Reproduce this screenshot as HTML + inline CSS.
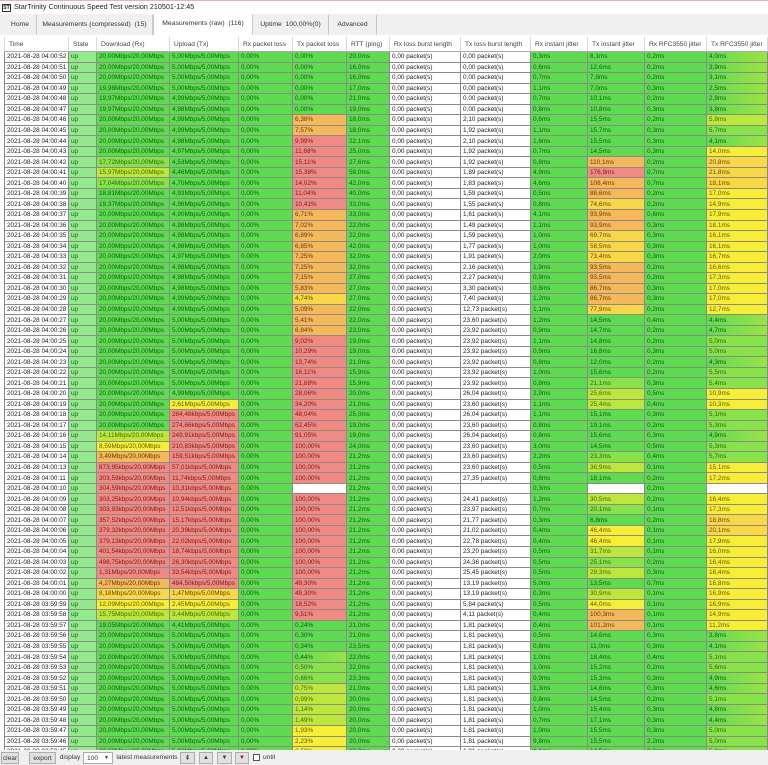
<!DOCTYPE html>
<html><head><meta charset="utf-8"><style>
*{margin:0;padding:0;box-sizing:border-box}
body{width:768px;height:765px;overflow:hidden;background:#fff;font-family:"Liberation Sans",sans-serif;position:relative;color:#222}
.tb{position:absolute;left:0;top:0;width:768px;height:14px;border-top:1px solid #e8b0b8;font-size:7.2px;line-height:12px;padding-left:14px}
.ic{position:absolute;left:2px;top:3px;width:9px;height:8px;border:1px solid #333;font-size:5px;line-height:6px;text-align:center;font-weight:bold}
.tabs{position:absolute;left:0;top:14px;width:768px;height:21px;background:#f0f0f0}
.tab{position:absolute;top:1px;height:20px;font-size:6.8px;line-height:20px;text-align:center;color:#333;border-right:1px solid #c8c8c8}
.tab.a{background:#fff;border-left:1px solid #ccc;border-right:1px solid #ccc}
.wrap{position:absolute;left:4px;top:37px;width:764px;height:713px;overflow:hidden}
table{border-collapse:separate;border-spacing:0;table-layout:fixed;width:764px}
td{border-right:1px solid #8a8a8a;border-bottom:1px solid #8a8a8a;font-size:6.4px;line-height:9px;height:10.54px;padding:0 0 0 2px;white-space:nowrap;overflow:hidden;color:#222;background:#fff;vertical-align:middle}
td:first-child{border-left:1px solid #8a8a8a}
tr.h td{height:15px;color:#444;font-size:6.6px;padding-left:4px;border-color:#d8d8d8;border-bottom:1px solid #aaa;background:#fff}
.l{background:#92ea8c;color:#0f6e0f}
.g{background:#5edc50;color:#0a620a}
.q{background:linear-gradient(90deg,#62dc50,#98e444);color:#0a620a}
.k{background:#88e24a;color:#2a6a0a}
.v{background:#bbe83a;color:#4a6a00}
.y{background:#f6ef36;color:#6a5a00}
.z{background:#f9d848;color:#6a4a00}
.o{background:#f5b85a;color:#6a3a00}
.r{background:#f08a82;color:#7a1a1a}
.tool{position:absolute;left:0;top:750px;width:768px;height:15px;background:#f0f0f0;font-size:6.6px;color:#333}
.tool div{position:absolute;top:2px;height:12px;line-height:11px;text-align:center;white-space:nowrap}
.bt{background:#e1e1e1;border:1px solid #adadad}
</style></head><body>
<div class="tb"><div class="ic">ST</div>StarTrinity Continuous Speed Test version 210501-12:45</div>
<div class="tabs">
<div class="tab" style="left:4px;width:33px">Home</div>
<div class="tab" style="left:37px;width:116px">Measurements (compressed) &nbsp;(15)</div>
<div class="tab a" style="left:153px;width:100px;top:0;height:21px">Measurements (raw) &nbsp;(116)</div>
<div class="tab" style="left:253px;width:76px">Uptime &nbsp;100,00%(0)</div>
<div class="tab" style="left:329px;width:48px">Advanced</div>
</div>
<div class="wrap"><table>
<colgroup><col style="width:65px"><col style="width:28px"><col style="width:73px"><col style="width:69px"><col style="width:54px"><col style="width:54px"><col style="width:43px"><col style="width:71px"><col style="width:70px"><col style="width:57px"><col style="width:57px"><col style="width:62px"><col style="width:61px"></colgroup>
<tr class="h"><td>Time</td><td>State</td><td>Download (Rx)</td><td>Upload (Tx)</td><td>Rx packet loss</td><td>Tx packet loss</td><td>RTT (ping)</td><td>Rx loss burst length</td><td>Tx loss burst length</td><td>Rx instant jitter</td><td>Tx instant jitter</td><td>Rx RFC3550 jitter</td><td>Tx RFC3550 jitter</td></tr>
<tr><td>2021-08-28 04:00:52</td><td class="l">up</td><td class="g">20,00Mbps/20,00Mbps</td><td class="g">5,00Mbps/5,00Mbps</td><td class="g">0,00%</td><td class="g">0,00%</td><td class="g">20,0ms</td><td>0,00 packet(s)</td><td>0,00 packet(s)</td><td class="g">0,3ms</td><td class="g">8,1ms</td><td class="g">0,2ms</td><td class="q">4,0ms</td></tr>
<tr><td>2021-08-28 04:00:51</td><td class="l">up</td><td class="g">20,00Mbps/20,00Mbps</td><td class="g">5,00Mbps/5,00Mbps</td><td class="g">0,00%</td><td class="g">0,00%</td><td class="g">16,0ms</td><td>0,00 packet(s)</td><td>0,00 packet(s)</td><td class="g">0,6ms</td><td class="g">12,6ms</td><td class="g">0,2ms</td><td class="q">3,9ms</td></tr>
<tr><td>2021-08-28 04:00:50</td><td class="l">up</td><td class="g">20,00Mbps/20,00Mbps</td><td class="g">5,00Mbps/5,00Mbps</td><td class="g">0,00%</td><td class="g">0,00%</td><td class="g">16,0ms</td><td>0,00 packet(s)</td><td>0,00 packet(s)</td><td class="g">0,7ms</td><td class="g">7,8ms</td><td class="g">0,2ms</td><td class="q">3,1ms</td></tr>
<tr><td>2021-08-28 04:00:49</td><td class="l">up</td><td class="g">19,98Mbps/20,00Mbps</td><td class="g">5,00Mbps/5,00Mbps</td><td class="g">0,00%</td><td class="g">0,00%</td><td class="g">17,0ms</td><td>0,00 packet(s)</td><td>0,00 packet(s)</td><td class="g">1,1ms</td><td class="g">7,0ms</td><td class="g">0,3ms</td><td class="q">2,5ms</td></tr>
<tr><td>2021-08-28 04:00:48</td><td class="l">up</td><td class="g">19,97Mbps/20,00Mbps</td><td class="g">4,99Mbps/5,00Mbps</td><td class="g">0,00%</td><td class="g">0,00%</td><td class="g">21,0ms</td><td>0,00 packet(s)</td><td>0,00 packet(s)</td><td class="g">0,7ms</td><td class="g">10,1ms</td><td class="g">0,2ms</td><td class="q">2,8ms</td></tr>
<tr><td>2021-08-28 04:00:47</td><td class="l">up</td><td class="g">19,97Mbps/20,00Mbps</td><td class="g">4,98Mbps/5,00Mbps</td><td class="g">0,00%</td><td class="g">0,00%</td><td class="g">19,0ms</td><td>0,00 packet(s)</td><td>0,00 packet(s)</td><td class="g">0,8ms</td><td class="g">10,8ms</td><td class="g">0,3ms</td><td class="q">3,8ms</td></tr>
<tr><td>2021-08-28 04:00:46</td><td class="l">up</td><td class="g">20,00Mbps/20,00Mbps</td><td class="g">4,99Mbps/5,00Mbps</td><td class="g">0,00%</td><td class="o">6,38%</td><td class="g">18,0ms</td><td>0,00 packet(s)</td><td>2,10 packet(s)</td><td class="g">0,6ms</td><td class="g">15,5ms</td><td class="g">0,2ms</td><td class="v">5,8ms</td></tr>
<tr><td>2021-08-28 04:00:45</td><td class="l">up</td><td class="g">20,00Mbps/20,00Mbps</td><td class="g">4,99Mbps/5,00Mbps</td><td class="g">0,00%</td><td class="o">7,57%</td><td class="g">18,0ms</td><td>0,00 packet(s)</td><td>1,92 packet(s)</td><td class="g">1,1ms</td><td class="g">15,7ms</td><td class="g">0,3ms</td><td class="k">5,7ms</td></tr>
<tr><td>2021-08-28 04:00:44</td><td class="l">up</td><td class="g">20,00Mbps/20,00Mbps</td><td class="g">4,98Mbps/5,00Mbps</td><td class="g">0,00%</td><td class="r">9,99%</td><td class="g">22,1ms</td><td>0,00 packet(s)</td><td>2,10 packet(s)</td><td class="g">1,6ms</td><td class="g">15,5ms</td><td class="g">0,3ms</td><td class="q">4,1ms</td></tr>
<tr><td>2021-08-28 04:00:43</td><td class="l">up</td><td class="g">20,00Mbps/20,00Mbps</td><td class="g">4,97Mbps/5,00Mbps</td><td class="g">0,00%</td><td class="r">11,68%</td><td class="g">25,0ms</td><td>0,00 packet(s)</td><td>1,92 packet(s)</td><td class="g">0,7ms</td><td class="g">14,5ms</td><td class="g">0,3ms</td><td class="y">14,0ms</td></tr>
<tr><td>2021-08-28 04:00:42</td><td class="l">up</td><td class="k">17,72Mbps/20,00Mbps</td><td class="g">4,53Mbps/5,00Mbps</td><td class="g">0,00%</td><td class="r">15,11%</td><td class="g">27,6ms</td><td>0,00 packet(s)</td><td>1,92 packet(s)</td><td class="g">0,8ms</td><td class="o">110,1ms</td><td class="g">0,2ms</td><td class="z">20,8ms</td></tr>
<tr><td>2021-08-28 04:00:41</td><td class="l">up</td><td class="v">15,97Mbps/20,00Mbps</td><td class="g">4,46Mbps/5,00Mbps</td><td class="g">0,00%</td><td class="r">15,38%</td><td class="g">59,0ms</td><td>0,00 packet(s)</td><td>1,89 packet(s)</td><td class="g">4,9ms</td><td class="r">176,9ms</td><td class="g">0,7ms</td><td class="z">21,8ms</td></tr>
<tr><td>2021-08-28 04:00:40</td><td class="l">up</td><td class="k">17,04Mbps/20,00Mbps</td><td class="g">4,70Mbps/5,00Mbps</td><td class="g">0,00%</td><td class="r">14,02%</td><td class="g">42,0ms</td><td>0,00 packet(s)</td><td>1,83 packet(s)</td><td class="g">4,6ms</td><td class="o">108,4ms</td><td class="g">0,7ms</td><td class="z">18,1ms</td></tr>
<tr><td>2021-08-28 04:00:39</td><td class="l">up</td><td class="g">18,81Mbps/20,00Mbps</td><td class="g">4,93Mbps/5,00Mbps</td><td class="g">0,00%</td><td class="r">11,04%</td><td class="g">40,0ms</td><td>0,00 packet(s)</td><td>1,59 packet(s)</td><td class="g">0,5ms</td><td class="o">88,6ms</td><td class="g">0,2ms</td><td class="y">17,0ms</td></tr>
<tr><td>2021-08-28 04:00:38</td><td class="l">up</td><td class="g">19,37Mbps/20,00Mbps</td><td class="g">4,96Mbps/5,00Mbps</td><td class="g">0,00%</td><td class="r">10,41%</td><td class="g">33,0ms</td><td>0,00 packet(s)</td><td>1,55 packet(s)</td><td class="g">0,8ms</td><td class="z">74,6ms</td><td class="g">0,2ms</td><td class="y">14,9ms</td></tr>
<tr><td>2021-08-28 04:00:37</td><td class="l">up</td><td class="g">20,00Mbps/20,00Mbps</td><td class="g">4,90Mbps/5,00Mbps</td><td class="g">0,00%</td><td class="o">6,71%</td><td class="g">33,0ms</td><td>0,00 packet(s)</td><td>1,61 packet(s)</td><td class="g">4,1ms</td><td class="o">93,9ms</td><td class="g">0,6ms</td><td class="y">17,9ms</td></tr>
<tr><td>2021-08-28 04:00:36</td><td class="l">up</td><td class="g">20,00Mbps/20,00Mbps</td><td class="g">4,98Mbps/5,00Mbps</td><td class="g">0,00%</td><td class="o">7,02%</td><td class="g">22,0ms</td><td>0,00 packet(s)</td><td>1,49 packet(s)</td><td class="g">1,1ms</td><td class="o">93,9ms</td><td class="g">0,3ms</td><td class="y">18,1ms</td></tr>
<tr><td>2021-08-28 04:00:35</td><td class="l">up</td><td class="g">20,00Mbps/20,00Mbps</td><td class="g">4,98Mbps/5,00Mbps</td><td class="g">0,00%</td><td class="o">6,89%</td><td class="g">22,0ms</td><td>0,00 packet(s)</td><td>1,59 packet(s)</td><td class="g">1,0ms</td><td class="z">69,7ms</td><td class="g">0,3ms</td><td class="y">16,1ms</td></tr>
<tr><td>2021-08-28 04:00:34</td><td class="l">up</td><td class="g">20,00Mbps/20,00Mbps</td><td class="g">4,98Mbps/5,00Mbps</td><td class="g">0,00%</td><td class="o">6,85%</td><td class="g">42,0ms</td><td>0,00 packet(s)</td><td>1,77 packet(s)</td><td class="g">1,0ms</td><td class="z">58,5ms</td><td class="g">0,3ms</td><td class="y">16,1ms</td></tr>
<tr><td>2021-08-28 04:00:33</td><td class="l">up</td><td class="g">20,00Mbps/20,00Mbps</td><td class="g">4,97Mbps/5,00Mbps</td><td class="g">0,00%</td><td class="o">7,25%</td><td class="g">32,0ms</td><td>0,00 packet(s)</td><td>1,91 packet(s)</td><td class="g">2,0ms</td><td class="z">73,4ms</td><td class="g">0,3ms</td><td class="y">16,7ms</td></tr>
<tr><td>2021-08-28 04:00:32</td><td class="l">up</td><td class="g">20,00Mbps/20,00Mbps</td><td class="g">4,98Mbps/5,00Mbps</td><td class="g">0,00%</td><td class="o">7,25%</td><td class="g">32,0ms</td><td>0,00 packet(s)</td><td>2,16 packet(s)</td><td class="g">1,9ms</td><td class="o">93,5ms</td><td class="g">0,2ms</td><td class="y">16,6ms</td></tr>
<tr><td>2021-08-28 04:00:31</td><td class="l">up</td><td class="g">20,00Mbps/20,00Mbps</td><td class="g">4,98Mbps/5,00Mbps</td><td class="g">0,00%</td><td class="o">7,15%</td><td class="g">27,0ms</td><td>0,00 packet(s)</td><td>2,27 packet(s)</td><td class="g">0,9ms</td><td class="o">93,5ms</td><td class="g">0,2ms</td><td class="y">17,3ms</td></tr>
<tr><td>2021-08-28 04:00:30</td><td class="l">up</td><td class="g">20,00Mbps/20,00Mbps</td><td class="g">4,98Mbps/5,00Mbps</td><td class="g">0,00%</td><td class="o">5,83%</td><td class="g">27,0ms</td><td>0,00 packet(s)</td><td>3,30 packet(s)</td><td class="g">0,8ms</td><td class="o">86,7ms</td><td class="g">0,3ms</td><td class="y">17,0ms</td></tr>
<tr><td>2021-08-28 04:00:29</td><td class="l">up</td><td class="g">20,00Mbps/20,00Mbps</td><td class="g">4,99Mbps/5,00Mbps</td><td class="g">0,00%</td><td class="z">4,74%</td><td class="g">27,0ms</td><td>0,00 packet(s)</td><td>7,40 packet(s)</td><td class="g">1,2ms</td><td class="o">86,7ms</td><td class="g">0,3ms</td><td class="y">17,0ms</td></tr>
<tr><td>2021-08-28 04:00:28</td><td class="l">up</td><td class="g">20,00Mbps/20,00Mbps</td><td class="g">4,99Mbps/5,00Mbps</td><td class="g">0,00%</td><td class="o">5,09%</td><td class="g">22,0ms</td><td>0,00 packet(s)</td><td>12,73 packet(s)</td><td class="g">1,1ms</td><td class="z">77,9ms</td><td class="g">0,2ms</td><td class="y">12,7ms</td></tr>
<tr><td>2021-08-28 04:00:27</td><td class="l">up</td><td class="g">20,00Mbps/20,00Mbps</td><td class="g">5,00Mbps/5,00Mbps</td><td class="g">0,00%</td><td class="o">5,41%</td><td class="g">22,0ms</td><td>0,00 packet(s)</td><td>23,60 packet(s)</td><td class="g">1,2ms</td><td class="g">14,5ms</td><td class="g">0,4ms</td><td class="q">4,4ms</td></tr>
<tr><td>2021-08-28 04:00:26</td><td class="l">up</td><td class="g">20,00Mbps/20,00Mbps</td><td class="g">5,00Mbps/5,00Mbps</td><td class="g">0,00%</td><td class="o">6,84%</td><td class="g">23,0ms</td><td>0,00 packet(s)</td><td>23,92 packet(s)</td><td class="g">0,9ms</td><td class="g">14,7ms</td><td class="g">0,2ms</td><td class="q">4,7ms</td></tr>
<tr><td>2021-08-28 04:00:25</td><td class="l">up</td><td class="g">20,00Mbps/20,00Mbps</td><td class="g">5,00Mbps/5,00Mbps</td><td class="g">0,00%</td><td class="r">9,02%</td><td class="g">19,0ms</td><td>0,00 packet(s)</td><td>23,92 packet(s)</td><td class="g">1,1ms</td><td class="g">14,8ms</td><td class="g">0,2ms</td><td class="k">5,0ms</td></tr>
<tr><td>2021-08-28 04:00:24</td><td class="l">up</td><td class="g">20,00Mbps/20,00Mbps</td><td class="g">5,00Mbps/5,00Mbps</td><td class="g">0,00%</td><td class="r">10,29%</td><td class="g">19,0ms</td><td>0,00 packet(s)</td><td>23,92 packet(s)</td><td class="g">0,9ms</td><td class="g">16,8ms</td><td class="g">0,3ms</td><td class="k">5,0ms</td></tr>
<tr><td>2021-08-28 04:00:23</td><td class="l">up</td><td class="g">20,00Mbps/20,00Mbps</td><td class="g">5,00Mbps/5,00Mbps</td><td class="g">0,00%</td><td class="r">13,74%</td><td class="g">21,0ms</td><td>0,00 packet(s)</td><td>23,92 packet(s)</td><td class="g">0,8ms</td><td class="g">12,0ms</td><td class="g">0,2ms</td><td class="q">4,3ms</td></tr>
<tr><td>2021-08-28 04:00:22</td><td class="l">up</td><td class="g">20,00Mbps/20,00Mbps</td><td class="g">5,00Mbps/5,00Mbps</td><td class="g">0,00%</td><td class="r">16,11%</td><td class="g">15,9ms</td><td>0,00 packet(s)</td><td>23,92 packet(s)</td><td class="g">1,0ms</td><td class="g">15,6ms</td><td class="g">0,2ms</td><td class="k">5,5ms</td></tr>
<tr><td>2021-08-28 04:00:21</td><td class="l">up</td><td class="g">20,00Mbps/20,00Mbps</td><td class="g">5,00Mbps/5,00Mbps</td><td class="g">0,00%</td><td class="r">21,88%</td><td class="g">15,9ms</td><td>0,00 packet(s)</td><td>23,92 packet(s)</td><td class="g">0,8ms</td><td class="k">21,1ms</td><td class="g">0,3ms</td><td class="k">5,4ms</td></tr>
<tr><td>2021-08-28 04:00:20</td><td class="l">up</td><td class="g">20,00Mbps/20,00Mbps</td><td class="g">4,99Mbps/5,00Mbps</td><td class="g">0,00%</td><td class="r">28,06%</td><td class="g">20,0ms</td><td>0,00 packet(s)</td><td>26,04 packet(s)</td><td class="g">2,9ms</td><td class="v">25,6ms</td><td class="g">0,5ms</td><td class="y">10,9ms</td></tr>
<tr><td>2021-08-28 04:00:19</td><td class="l">up</td><td class="g">20,00Mbps/20,00Mbps</td><td class="y">2,61Mbps/5,00Mbps</td><td class="g">0,00%</td><td class="r">34,20%</td><td class="g">21,0ms</td><td>0,00 packet(s)</td><td>23,60 packet(s)</td><td class="g">1,1ms</td><td class="v">25,4ms</td><td class="g">0,4ms</td><td class="y">10,3ms</td></tr>
<tr><td>2021-08-28 04:00:18</td><td class="l">up</td><td class="g">20,00Mbps/20,00Mbps</td><td class="r">284,48kbps/5,00Mbps</td><td class="g">0,00%</td><td class="r">48,04%</td><td class="g">25,0ms</td><td>0,00 packet(s)</td><td>26,04 packet(s)</td><td class="g">1,1ms</td><td class="g">15,1ms</td><td class="g">0,3ms</td><td class="k">5,1ms</td></tr>
<tr><td>2021-08-28 04:00:17</td><td class="l">up</td><td class="g">20,00Mbps/20,00Mbps</td><td class="r">274,66kbps/5,00Mbps</td><td class="g">0,00%</td><td class="r">62,45%</td><td class="g">19,0ms</td><td>0,00 packet(s)</td><td>23,60 packet(s)</td><td class="g">0,8ms</td><td class="g">19,1ms</td><td class="g">0,2ms</td><td class="k">5,3ms</td></tr>
<tr><td>2021-08-28 04:00:16</td><td class="l">up</td><td class="v">14,11Mbps/20,00Mbps</td><td class="r">249,91kbps/5,00Mbps</td><td class="g">0,00%</td><td class="r">91,05%</td><td class="g">19,0ms</td><td>0,00 packet(s)</td><td>26,04 packet(s)</td><td class="g">0,8ms</td><td class="g">15,6ms</td><td class="g">0,3ms</td><td class="q">4,9ms</td></tr>
<tr><td>2021-08-28 04:00:15</td><td class="l">up</td><td class="y">8,59Mbps/20,00Mbps</td><td class="r">210,83kbps/5,00Mbps</td><td class="g">0,00%</td><td class="r">100,00%</td><td class="g">24,0ms</td><td>0,00 packet(s)</td><td>23,60 packet(s)</td><td class="g">3,0ms</td><td class="g">14,5ms</td><td class="g">0,5ms</td><td class="k">5,3ms</td></tr>
<tr><td>2021-08-28 04:00:14</td><td class="l">up</td><td class="o">3,49Mbps/20,00Mbps</td><td class="r">159,51kbps/5,00Mbps</td><td class="g">0,00%</td><td class="r">100,00%</td><td class="g">21,2ms</td><td>0,00 packet(s)</td><td>23,60 packet(s)</td><td class="g">2,2ms</td><td class="k">23,3ms</td><td class="g">0,4ms</td><td class="k">5,7ms</td></tr>
<tr><td>2021-08-28 04:00:13</td><td class="l">up</td><td class="r">873,95kbps/20,00Mbps</td><td class="r">57,01kbps/5,00Mbps</td><td class="g">0,00%</td><td class="r">100,00%</td><td class="g">21,2ms</td><td>0,00 packet(s)</td><td>23,60 packet(s)</td><td class="g">0,5ms</td><td class="v">36,9ms</td><td class="g">0,1ms</td><td class="y">15,1ms</td></tr>
<tr><td>2021-08-28 04:00:11</td><td class="l">up</td><td class="r">303,59kbps/20,00Mbps</td><td class="r">11,74kbps/5,00Mbps</td><td class="g">0,00%</td><td class="r">100,00%</td><td class="g">21,2ms</td><td>0,00 packet(s)</td><td>27,35 packet(s)</td><td class="g">0,8ms</td><td class="g">18,1ms</td><td class="g">0,2ms</td><td class="y">17,2ms</td></tr>
<tr><td>2021-08-28 04:00:10</td><td class="l">up</td><td class="r">304,59kbps/20,00Mbps</td><td class="r">10,31kbps/5,00Mbps</td><td class="g">0,00%</td><td></td><td class="g">21,2ms</td><td>0,00 packet(s)</td><td></td><td class="g">0,3ms</td><td></td><td class="g">0,2ms</td><td></td></tr>
<tr><td>2021-08-28 04:00:09</td><td class="l">up</td><td class="r">303,25kbps/20,00Mbps</td><td class="r">10,94kbps/5,00Mbps</td><td class="g">0,00%</td><td class="r">100,00%</td><td class="g">21,2ms</td><td>0,00 packet(s)</td><td>24,41 packet(s)</td><td class="g">1,2ms</td><td class="v">30,5ms</td><td class="g">0,2ms</td><td class="y">16,4ms</td></tr>
<tr><td>2021-08-28 04:00:08</td><td class="l">up</td><td class="r">303,93kbps/20,00Mbps</td><td class="r">12,51kbps/5,00Mbps</td><td class="g">0,00%</td><td class="r">100,00%</td><td class="g">21,2ms</td><td>0,00 packet(s)</td><td>23,97 packet(s)</td><td class="g">0,7ms</td><td class="k">20,1ms</td><td class="g">0,1ms</td><td class="y">17,3ms</td></tr>
<tr><td>2021-08-28 04:00:07</td><td class="l">up</td><td class="r">357,52kbps/20,00Mbps</td><td class="r">15,17kbps/5,00Mbps</td><td class="g">0,00%</td><td class="r">100,00%</td><td class="g">21,2ms</td><td>0,00 packet(s)</td><td>21,77 packet(s)</td><td class="g">0,3ms</td><td class="g">6,8ms</td><td class="g">0,2ms</td><td class="z">18,8ms</td></tr>
<tr><td>2021-08-28 04:00:06</td><td class="l">up</td><td class="r">379,32kbps/20,00Mbps</td><td class="r">20,39kbps/5,00Mbps</td><td class="g">0,00%</td><td class="r">100,00%</td><td class="g">21,2ms</td><td>0,00 packet(s)</td><td>21,02 packet(s)</td><td class="g">0,4ms</td><td class="y">46,4ms</td><td class="g">0,1ms</td><td class="z">20,1ms</td></tr>
<tr><td>2021-08-28 04:00:05</td><td class="l">up</td><td class="r">379,13kbps/20,00Mbps</td><td class="r">22,02kbps/5,00Mbps</td><td class="g">0,00%</td><td class="r">100,00%</td><td class="g">21,2ms</td><td>0,00 packet(s)</td><td>22,78 packet(s)</td><td class="g">0,4ms</td><td class="y">46,4ms</td><td class="g">0,1ms</td><td class="y">17,9ms</td></tr>
<tr><td>2021-08-28 04:00:04</td><td class="l">up</td><td class="r">401,54kbps/20,00Mbps</td><td class="r">18,74kbps/5,00Mbps</td><td class="g">0,00%</td><td class="r">100,00%</td><td class="g">21,2ms</td><td>0,00 packet(s)</td><td>23,20 packet(s)</td><td class="g">0,5ms</td><td class="v">31,7ms</td><td class="g">0,1ms</td><td class="y">16,0ms</td></tr>
<tr><td>2021-08-28 04:00:03</td><td class="l">up</td><td class="r">498,75kbps/20,00Mbps</td><td class="r">26,30kbps/5,00Mbps</td><td class="g">0,00%</td><td class="r">100,00%</td><td class="g">21,2ms</td><td>0,00 packet(s)</td><td>24,36 packet(s)</td><td class="g">0,5ms</td><td class="k">25,1ms</td><td class="g">0,2ms</td><td class="y">16,4ms</td></tr>
<tr><td>2021-08-28 04:00:02</td><td class="l">up</td><td class="r">1,31Mbps/20,00Mbps</td><td class="r">33,54kbps/5,00Mbps</td><td class="g">0,00%</td><td class="r">100,00%</td><td class="g">21,2ms</td><td>0,00 packet(s)</td><td>25,45 packet(s)</td><td class="g">0,5ms</td><td class="v">29,3ms</td><td class="g">0,3ms</td><td class="y">16,4ms</td></tr>
<tr><td>2021-08-28 04:00:01</td><td class="l">up</td><td class="o">4,27Mbps/20,00Mbps</td><td class="r">484,50kbps/5,00Mbps</td><td class="g">0,00%</td><td class="r">49,30%</td><td class="g">21,2ms</td><td>0,00 packet(s)</td><td>13,19 packet(s)</td><td class="g">5,0ms</td><td class="g">13,5ms</td><td class="g">0,7ms</td><td class="y">16,8ms</td></tr>
<tr><td>2021-08-28 04:00:00</td><td class="l">up</td><td class="z">8,18Mbps/20,00Mbps</td><td class="z">1,47Mbps/5,00Mbps</td><td class="g">0,00%</td><td class="r">49,30%</td><td class="g">21,2ms</td><td>0,00 packet(s)</td><td>13,19 packet(s)</td><td class="g">0,3ms</td><td class="v">30,9ms</td><td class="g">0,1ms</td><td class="y">16,9ms</td></tr>
<tr><td>2021-08-28 03:59:59</td><td class="l">up</td><td class="y">12,09Mbps/20,00Mbps</td><td class="y">2,45Mbps/5,00Mbps</td><td class="g">0,00%</td><td class="r">18,52%</td><td class="g">21,2ms</td><td>0,00 packet(s)</td><td>5,84 packet(s)</td><td class="g">0,5ms</td><td class="y">44,0ms</td><td class="g">0,1ms</td><td class="y">16,9ms</td></tr>
<tr><td>2021-08-28 03:59:58</td><td class="l">up</td><td class="v">15,75Mbps/20,00Mbps</td><td class="v">3,44Mbps/5,00Mbps</td><td class="g">0,00%</td><td class="r">9,51%</td><td class="g">21,2ms</td><td>0,00 packet(s)</td><td>4,11 packet(s)</td><td class="g">0,4ms</td><td class="o">100,3ms</td><td class="g">0,1ms</td><td class="y">14,9ms</td></tr>
<tr><td>2021-08-28 03:59:57</td><td class="l">up</td><td class="g">19,05Mbps/20,00Mbps</td><td class="g">4,41Mbps/5,00Mbps</td><td class="g">0,00%</td><td class="g">0,24%</td><td class="g">21,0ms</td><td>0,00 packet(s)</td><td>1,81 packet(s)</td><td class="g">0,4ms</td><td class="o">101,2ms</td><td class="g">0,1ms</td><td class="y">11,2ms</td></tr>
<tr><td>2021-08-28 03:59:56</td><td class="l">up</td><td class="g">20,00Mbps/20,00Mbps</td><td class="g">5,00Mbps/5,00Mbps</td><td class="g">0,00%</td><td class="g">0,30%</td><td class="g">21,0ms</td><td>0,00 packet(s)</td><td>1,81 packet(s)</td><td class="g">0,5ms</td><td class="g">14,6ms</td><td class="g">0,3ms</td><td class="q">3,8ms</td></tr>
<tr><td>2021-08-28 03:59:55</td><td class="l">up</td><td class="g">20,00Mbps/20,00Mbps</td><td class="g">5,00Mbps/5,00Mbps</td><td class="g">0,00%</td><td class="g">0,34%</td><td class="g">23,5ms</td><td>0,00 packet(s)</td><td>1,81 packet(s)</td><td class="g">0,8ms</td><td class="g">11,0ms</td><td class="g">0,3ms</td><td class="q">4,1ms</td></tr>
<tr><td>2021-08-28 03:59:54</td><td class="l">up</td><td class="g">20,00Mbps/20,00Mbps</td><td class="g">5,00Mbps/5,00Mbps</td><td class="g">0,00%</td><td class="q">0,44%</td><td class="g">22,0ms</td><td>0,00 packet(s)</td><td>1,81 packet(s)</td><td class="g">1,0ms</td><td class="g">18,4ms</td><td class="g">0,4ms</td><td class="k">5,1ms</td></tr>
<tr><td>2021-08-28 03:59:53</td><td class="l">up</td><td class="g">20,00Mbps/20,00Mbps</td><td class="g">5,00Mbps/5,00Mbps</td><td class="g">0,00%</td><td class="k">0,50%</td><td class="g">22,0ms</td><td>0,00 packet(s)</td><td>1,81 packet(s)</td><td class="g">1,0ms</td><td class="g">15,2ms</td><td class="g">0,2ms</td><td class="k">5,6ms</td></tr>
<tr><td>2021-08-28 03:59:52</td><td class="l">up</td><td class="g">20,00Mbps/20,00Mbps</td><td class="g">5,00Mbps/5,00Mbps</td><td class="g">0,00%</td><td class="k">0,66%</td><td class="g">23,3ms</td><td>0,00 packet(s)</td><td>1,81 packet(s)</td><td class="g">0,9ms</td><td class="g">15,3ms</td><td class="g">0,3ms</td><td class="q">4,9ms</td></tr>
<tr><td>2021-08-28 03:59:51</td><td class="l">up</td><td class="g">20,00Mbps/20,00Mbps</td><td class="g">5,00Mbps/5,00Mbps</td><td class="g">0,00%</td><td class="v">0,75%</td><td class="g">21,0ms</td><td>0,00 packet(s)</td><td>1,81 packet(s)</td><td class="g">1,3ms</td><td class="g">14,6ms</td><td class="g">0,3ms</td><td class="q">4,6ms</td></tr>
<tr><td>2021-08-28 03:59:50</td><td class="l">up</td><td class="g">20,00Mbps/20,00Mbps</td><td class="g">5,00Mbps/5,00Mbps</td><td class="g">0,00%</td><td class="v">0,99%</td><td class="g">20,0ms</td><td>0,00 packet(s)</td><td>1,81 packet(s)</td><td class="g">0,8ms</td><td class="g">14,5ms</td><td class="g">0,2ms</td><td class="k">5,1ms</td></tr>
<tr><td>2021-08-28 03:59:49</td><td class="l">up</td><td class="g">20,00Mbps/20,00Mbps</td><td class="g">5,00Mbps/5,00Mbps</td><td class="g">0,00%</td><td class="v">1,14%</td><td class="g">20,0ms</td><td>0,00 packet(s)</td><td>1,81 packet(s)</td><td class="g">1,0ms</td><td class="g">15,4ms</td><td class="g">0,3ms</td><td class="q">4,8ms</td></tr>
<tr><td>2021-08-28 03:59:48</td><td class="l">up</td><td class="g">20,00Mbps/20,00Mbps</td><td class="g">5,00Mbps/5,00Mbps</td><td class="g">0,00%</td><td class="v">1,49%</td><td class="g">20,0ms</td><td>0,00 packet(s)</td><td>1,81 packet(s)</td><td class="g">0,7ms</td><td class="g">17,1ms</td><td class="g">0,3ms</td><td class="q">4,4ms</td></tr>
<tr><td>2021-08-28 03:59:47</td><td class="l">up</td><td class="g">20,00Mbps/20,00Mbps</td><td class="g">5,00Mbps/5,00Mbps</td><td class="g">0,00%</td><td class="y">1,93%</td><td class="g">20,0ms</td><td>0,00 packet(s)</td><td>1,81 packet(s)</td><td class="g">1,0ms</td><td class="g">15,5ms</td><td class="g">0,3ms</td><td class="k">5,0ms</td></tr>
<tr><td>2021-08-28 03:59:46</td><td class="l">up</td><td class="g">20,00Mbps/20,00Mbps</td><td class="g">5,00Mbps/5,00Mbps</td><td class="g">0,00%</td><td class="y">2,23%</td><td class="g">20,0ms</td><td>0,00 packet(s)</td><td>1,81 packet(s)</td><td class="g">9,8ms</td><td class="g">15,5ms</td><td class="g">2,2ms</td><td class="k">5,0ms</td></tr>
<tr><td>2021-08-28 03:59:45</td><td class="l">up</td><td class="g">20,00Mbps/20,00Mbps</td><td class="g">5,00Mbps/5,00Mbps</td><td class="g">0,00%</td><td class="y">2,50%</td><td class="g">19,0ms</td><td>0,00 packet(s)</td><td>1,81 packet(s)</td><td class="g">1,1ms</td><td class="g">14,5ms</td><td class="g">0,3ms</td><td class="k">5,0ms</td></tr>
</table></div>
<div class="tool">
<div class="bt" style="left:1px;width:18px">clear</div>
<div class="bt" style="left:29px;width:27px">export</div>
<div style="left:59px;width:22px">display</div>
<div style="left:83px;width:30px;background:#fff;border:1px solid #aaa;text-align:left;padding-left:3px">100<span style="position:absolute;right:3px;font-size:5px">▼</span></div>
<div style="left:116px;width:62px">latest measurements</div>
<div class="bt" style="left:180px;width:15px;font-size:7px">⇞</div>
<div class="bt" style="left:199px;width:14px;font-size:6px">▲</div>
<div class="bt" style="left:217px;width:15px;font-size:6px">▼</div>
<div class="bt" style="left:235px;width:14px;font-size:6px;color:#a01818">▼</div>
<div style="left:253px;top:4px;width:7px;height:7px;background:#fff;border:1px solid #555"></div>
<div style="left:263px;width:11px">until</div>
</div>
</body></html>
